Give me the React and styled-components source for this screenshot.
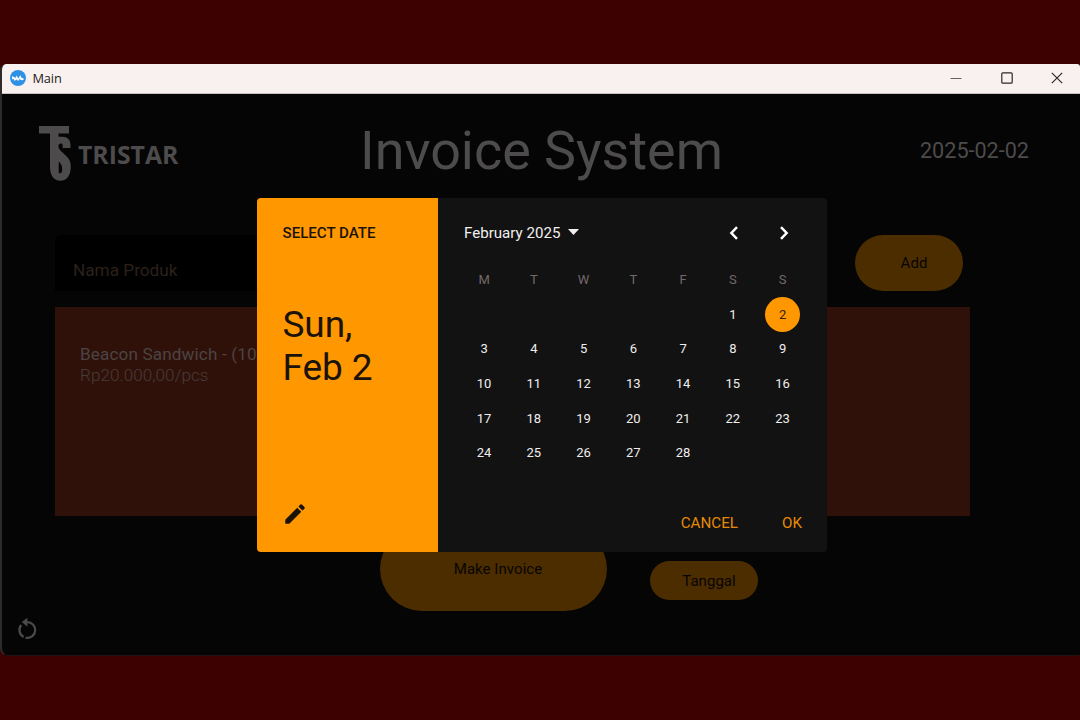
import React from "react";
import styled, { createGlobalStyle } from "styled-components";

const GlobalStyle = createGlobalStyle`
  * { box-sizing: border-box; }
  body { margin: 0; background: #3e0101; }
`;

const Desktop = styled.div`
  width: 1080px;
  height: 720px;
  padding: 64px 0;
  background: #3e0101;
  font-family: Roboto, sans-serif;
  overflow: hidden;
`;

const Window = styled.div`
  position: relative;
  height: 592px;
  display: flex;
  flex-direction: column;
  background: #050505;
  border-radius: 6px 3px 3px 8px;
  border-left: 2px solid #2e2b2c;
  border-bottom: 1px solid #211313;
  overflow: hidden;
`;

const TitleBar = styled.header`
  height: 30px;
  flex: none;
  display: flex;
  align-items: center;
  padding: 0 0 2px 8px;
  background: #f9f1f0;
  color: #1c1a1a;
  font-family: "Open Sans", sans-serif;
  font-size: 12.8px;
  border-bottom: 1px solid #c9c2c1;
`;

const WindowName = styled.span`
  flex: 1;
  margin: 0 0 0 6.5px;
  letter-spacing: -0.15px;
`;

const WindowControls = styled.div`
  display: flex;
  gap: 38.5px;
  padding-right: 17px;
  svg { display: block; }
`;

const Content = styled.main`
  flex: 1;
  display: flex;
  flex-direction: column;
  padding: 26px 0 0;
`;

const Header = styled.div`
  height: 62px;
  display: flex;
  align-items: center;
  padding: 0 51px 0 37px;
  color: #4d4b4b;
`;

const Brand = styled.div`
  display: flex;
  align-items: center;
  width: 321px;
  gap: 7px;
  padding-top: 5px;
`;

const BrandName = styled.span`
  margin: 1px 0 0 -1px;
  font-family: "Open Sans", sans-serif;
  font-weight: 700;
  font-size: 24.8px;
  line-height: 30px;
`;

const Title = styled.h1`
  flex: 1;
  margin: 0;
  font-size: 53.9px;
  line-height: 62px;
  font-weight: 400;
  white-space: nowrap;
`;

const Today = styled.span`
  font-size: 21.6px;
  line-height: 24px;
`;

const SearchRow = styled.div`
  display: flex;
  justify-content: space-between;
  margin: 53px 117px 0 53px;
`;

const Field = styled.div`
  width: 760px;
  height: 56px;
  padding: 24.5px 18px 0;
  background: #000;
  border-radius: 6px 6px 0 0;
  color: #2c211b;
  font-size: 17.2px;
  line-height: 20px;
`;

const PillButton = styled.button`
  width: ${(p) => p.$width}px;
  height: ${(p) => p.$height}px;
  padding: 0 0 0 ${(p) => p.$inset || 0}px;
  border: 0;
  border-radius: 42px;
  background: #4c2d00;
  color: #080503;
  font-family: inherit;
  font-size: 15px;
  letter-spacing: 0.05px;
`;

const ProductList = styled.div`
  height: 209px;
  margin: 16px 110px 0 53px;
  padding: 37px 25px;
  background: #30110a;
`;

const ProductName = styled.div`
  color: #4b4442;
  font-size: 17.1px;
  line-height: 21px;
  letter-spacing: 0.15px;
`;

const ProductPrice = styled.div`
  color: #463c39;
  font-size: 17.1px;
  font-weight: 300;
  line-height: 21px;
  letter-spacing: 0.05px;
`;

const Actions = styled.div`
  display: flex;
  gap: 43px;
  align-items: flex-end;
  padding: 11px 0 0 378px;
`;

const DateAction = styled.div`
  padding-bottom: 11px;
`;

const Footer = styled.div`
  padding: 6px 0 0 15px;
  svg { display: block; }
`;

const EdgeMark = styled.i`
  position: absolute;
  left: -2px;
  top: ${(p) => p.$top}px;
  width: 2px;
  height: ${(p) => p.$height}px;
  background: #d17b04;
`;

const WindowEdge = styled.div`
  position: absolute;
  left: 0;
  top: 36px;
  width: 1px;
  height: 548px;
  background: #3a3637;
`;

const WindowFrame = styled.div`
  position: relative;
`;

const Dialog = styled.section`
  position: absolute;
  left: 256.5px;
  top: 134px;
  width: 570px;
  height: 354px;
  display: flex;
  border-radius: 4px;
  overflow: hidden;
  background: #121212;
`;

const Summary = styled.div`
  width: 181px;
  padding: 25px 26px 25px;
  display: flex;
  flex-direction: column;
  background: #ff9800;
  color: #1c1308;
  svg { display: block; margin-top: auto; margin-left: -0.5px; }
`;

const SummaryLabel = styled.div`
  font-size: 15.1px;
  line-height: 20px;
  font-weight: 500;
  white-space: nowrap;
`;

const SummaryDate = styled.div`
  margin-top: 60px;
  font-size: 37px;
  line-height: 43px;
  letter-spacing: -0.1px;
`;

const Picker = styled.div`
  flex: 1;
  display: flex;
  flex-direction: column;
  color: #f1efef;
`;

const MonthBar = styled.div`
  display: flex;
  align-items: center;
  height: 20px;
  margin: 25px 37.5px 0 26.5px;
  svg { display: block; }
`;

const Month = styled.div`
  flex: 1;
  display: flex;
  align-items: center;
  gap: 7.5px;
  font-size: 15.1px;
  svg { margin-top: -2px; }
`;

const Pager = styled.div`
  display: flex;
  gap: 40px;
`;

const Days = styled.div`
  display: grid;
  grid-template-columns: repeat(7, 49.75px);
  grid-auto-rows: 34.6px;
  justify-items: center;
  margin: 19.2px 0 0 21.7px;
`;

const Day = styled.span`
  width: 35px;
  height: 35px;
  line-height: 35px;
  border-radius: 50%;
  text-align: center;
  font-size: 13px;
  color: ${(p) => (p.$selected ? "#33210a" : p.$heading ? "#74696a" : "#efeded")};
  background: ${(p) => (p.$selected ? "#ff9800" : "transparent")};
`;

const DialogActions = styled.div`
  display: flex;
  justify-content: flex-end;
  gap: 44px;
  margin: auto 24.5px 19px 0;
`;

const TextButton = styled.button`
  padding: 0;
  border: 0;
  background: none;
  color: #e58a05;
  font-family: inherit;
  font-size: 15.2px;
  line-height: 20px;
`;

const cells = [
  ...["M", "T", "W", "T", "F", "S", "S"].map((t) => ({ t, heading: true })),
  ...Array(5).fill({ t: "" }),
  ...Array.from({ length: 28 }, (_, i) => ({ t: i + 1, selected: i === 1 })),
];

const AppIcon = () => (
  <svg width="16" height="16" viewBox="0 0 16 16">
    <circle cx="8" cy="8" r="8" fill="#2f91e4" />
    <path d="M1.8 6.2 4.4 7l1 .9 1.3-2.4 1.6 2.9L10.4 5l.7 2.2 1.2.9 1.4.4-.2 1.6-2.4.2-1.6-1.2-1.3 2-1.8-1.6-1.8 1.6-1-2.2-1.5.3Z" fill="#f4faff" />
  </svg>
);

const BrandMark = () => (
  <svg width="33" height="55" viewBox="0 0 33 55" fill="currentColor">
    <path d="M0 0h30v7.5H19.5v3.3h3.8c5.3 0 8.2 3 8.2 8.2v3h-7.9v-2.4c0-1.4-.6-2-1.8-2-1.6 0-2.3 1-2.3 2.6 0 1.7.6 2.9 2.2 4.5l5.5 5.2c3.3 3.1 4.6 6 4.6 10.1 0 9.4-3.6 14.7-10.4 14.7S11 49.5 11 40.5v-33H0Zm19.7 35.5v10.2c0 1 .5 1.6 1.4 1.6 1.4 0 2.1-1.4 2.1-4.2 0-3.2-1-5.2-3.5-7.6Z" fillRule="evenodd" />
  </svg>
);

export default function App() {
  return (
    <>
      <GlobalStyle />
      <Desktop>
        <WindowFrame>
          <Window>
            <TitleBar>
              <AppIcon />
              <WindowName>Main</WindowName>
              <WindowControls>
                <svg width="12" height="12" viewBox="0 0 12 12" stroke="#676363" fill="none"><path d="M.5 6.5h11" /></svg>
                <svg width="12" height="12" viewBox="0 0 12 12" stroke="#2b2929" strokeWidth="1.2" fill="none"><rect x=".8" y=".8" width="10.4" height="10.4" rx="1" /></svg>
                <svg width="12" height="12" viewBox="0 0 12 12" stroke="#2b2929" strokeWidth="1.2" fill="none"><path d="m.8.8 10.4 10.4m0-10.4L.8 11.2" /></svg>
              </WindowControls>
            </TitleBar>
            <Content>
              <Header>
                <Brand>
                  <BrandMark />
                  <BrandName>TRISTAR</BrandName>
                </Brand>
                <Title>Invoice System</Title>
                <Today>2025-02-02</Today>
              </Header>
              <SearchRow>
                <Field>Nama Produk</Field>
                <PillButton $width={108} $height={56} $inset={10}>Add</PillButton>
              </SearchRow>
              <ProductList>
                <ProductName>Beacon Sandwich - (10)</ProductName>
                <ProductPrice>Rp20.000,00/pcs</ProductPrice>
              </ProductList>
              <Actions>
                <PillButton $width={227} $height={84} $inset={9}>Make Invoice</PillButton>
                <DateAction>
                  <PillButton $width={108} $height={39} $inset={10}>Tanggal</PillButton>
                </DateAction>
              </Actions>
              <Footer>
                <svg width="20" height="24" viewBox="0 0 20 24" fill="none" stroke="#4c4b4b" strokeWidth="2.2">
                  <path d="M10.2 5.1A7.9 7.9 0 1 1 8.6 20.7" />
                  <path d="M6.6 20A7.9 7.9 0 0 1 4.2 8" />
                  <path d="M10.4.8v9L4.8 5.1Z" fill="#4c4b4b" stroke="none" />
                </svg>
              </Footer>
            </Content>
            <EdgeMark $top={151} $height={5} />
            <EdgeMark $top={520} $height={25} />
          </Window>
          <Dialog>
            <Summary>
              <SummaryLabel>SELECT DATE</SummaryLabel>
              <SummaryDate>Sun,<br />Feb 2</SummaryDate>
              <svg width="26" height="26" viewBox="0 0 24 24" fill="currentColor">
                <path d="M3 17.25V21h3.75L17.81 9.94l-3.75-3.75L3 17.25ZM20.71 7.04a1 1 0 0 0 0-1.41l-2.34-2.34a1 1 0 0 0-1.41 0l-1.83 1.83 3.75 3.75 1.83-1.83Z" />
              </svg>
            </Summary>
            <Picker>
              <MonthBar>
                <Month>
                  February 2025
                  <svg width="11" height="6" viewBox="0 0 11 6" fill="currentColor"><path d="M0 0h11L5.5 6Z" /></svg>
                </Month>
                <Pager>
                  <svg width="10" height="14" viewBox="0 0 10 14" fill="none" stroke="#fff" strokeWidth="2.5"><path d="M8 1.2 2.4 7 8 12.8" /></svg>
                  <svg width="10" height="14" viewBox="0 0 10 14" fill="none" stroke="#fff" strokeWidth="2.5"><path d="M2 1.2 7.6 7 2 12.8" /></svg>
                </Pager>
              </MonthBar>
              <Days>
                {cells.map((c, i) => (
                  <Day key={i} $heading={c.heading} $selected={c.selected}>{c.t}</Day>
                ))}
              </Days>
              <DialogActions>
                <TextButton>CANCEL</TextButton>
                <TextButton>OK</TextButton>
              </DialogActions>
            </Picker>
          </Dialog>
        </WindowFrame>
      </Desktop>
    </>
  );
}
